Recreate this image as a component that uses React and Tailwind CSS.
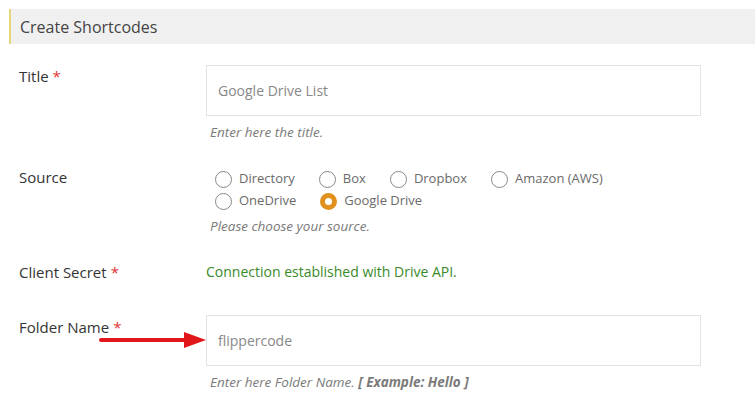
import React from "react";

const font = { fontFamily: "'Open Sans', 'Noto Sans', sans-serif" };

const Label = ({ children, required }) => (
  <div className="w-[206px] shrink-0 pl-[19px] text-[15px] leading-[20px] text-[#333]">
    {children}
    {required && <span className="text-[#d33] ml-1">*</span>}
  </div>
);

const Radio = ({ label, checked }) => (
  <label className="flex items-center mr-[24px] h-[22px]">
    {checked ? (
      <span className="w-[17px] h-[17px] rounded-full border-[5px] border-[#e0901d] bg-white" />
    ) : (
      <span className="w-[17px] h-[17px] rounded-full border border-[#888] bg-white" />
    )}
    <span className="ml-[7px] text-[13px] text-[#6a6a6a]">{label}</span>
  </label>
);

const Help = ({ children, className = "mt-[7px]" }) => (
  <div className={`pl-[4px] ${className} text-[13.5px] leading-[18px] italic text-[#7a7a7a]`}>{children}</div>
);

const App = () => {
  return (
    <div className="w-[755px] h-[406px] bg-white overflow-hidden" style={font}>
      <div className="mt-[9px] ml-[9px] h-[35px] bg-[#f0f0f0] border-l-2 border-[#e6d77c] flex items-center pl-[9px]">
        <h1 className="text-[16px] text-[#444]">Create Shortcodes</h1>
      </div>

      <div className="flex mt-[21px]">
        <div className="pt-[1px]">
          <Label required>Title</Label>
        </div>
        <div>
          <div className="w-[495px] h-[51px] border border-[#e3e3e3] flex items-center pl-[11px] text-[14px] text-[#888]">
            Google Drive List
          </div>
          <Help>Enter here the title.</Help>
        </div>
      </div>

      <div className="flex mt-[26px]">
        <div>
          <Label>Source</Label>
        </div>
        <div>
          <div className="pl-[9px] pt-[1px]">
            <div className="flex">
              <Radio label="Directory" />
              <Radio label="Box" />
              <Radio label="Dropbox" />
              <Radio label="Amazon (AWS)" />
            </div>
            <div className="flex">
              <Radio label="OneDrive" />
              <Radio label="Google Drive" checked />
            </div>
          </div>
          <Help className="mt-[5px]">Please choose your source.</Help>
        </div>
      </div>

      <div className="flex mt-[27px]">
        <Label required>Client Secret</Label>
        <div className="text-[14px] leading-[20px] text-[#3a8a2a]">Connection established with Drive API.</div>
      </div>

      <div className="flex mt-[33px] relative">
        <div className="pt-[2px]">
          <Label required>Folder Name</Label>
        </div>
        <div>
          <div className="w-[495px] h-[51px] border border-[#e3e3e3] flex items-center pl-[11px] text-[14px] text-[#888]">
            flippercode
          </div>
          <Help>
            Enter here Folder Name. <b>[ Example: Hello ]</b>
          </Help>
        </div>
        <svg className="absolute left-[98px] top-[16px]" width="110" height="18" viewBox="0 0 110 18">
          <line x1="3" y1="9" x2="90" y2="9" stroke="#e0161a" strokeWidth="4" strokeLinecap="round" />
          <polygon points="86,1 108,9 86,17" fill="#e0161a" />
        </svg>
      </div>
    </div>
  );
};

export default App;
